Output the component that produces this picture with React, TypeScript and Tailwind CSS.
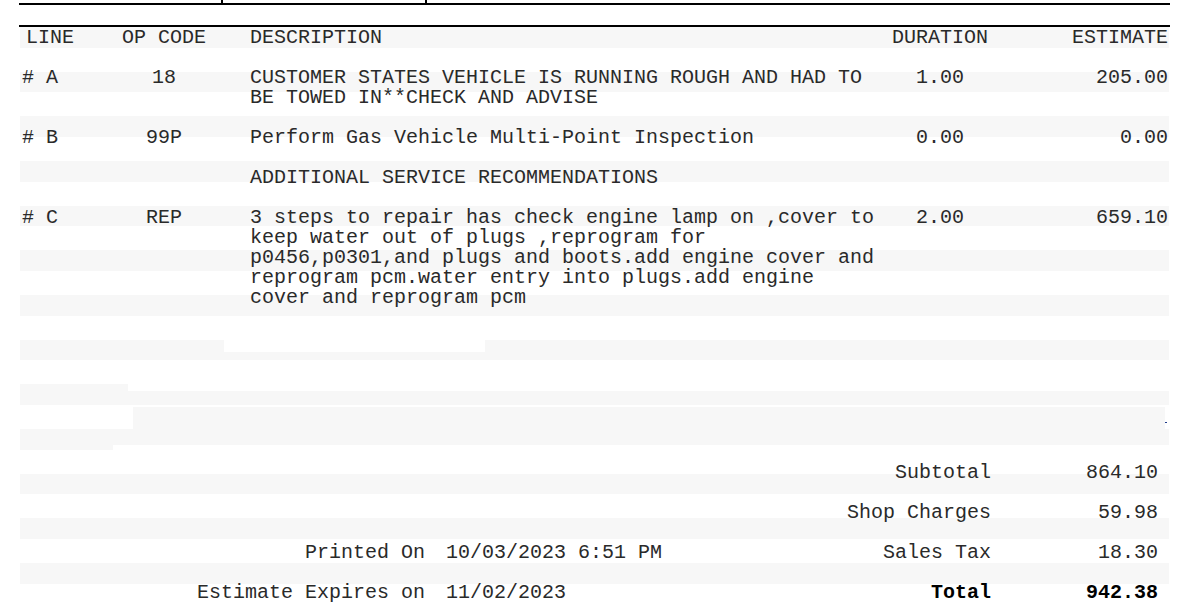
import React from 'react';

interface LineItem {
  line: string;
  op: string;
  desc: string;
  dur: string;
  est: string;
}

const items: LineItem[] = [
  {
    line: '# A',
    op: '18',
    desc: 'CUSTOMER STATES VEHICLE IS RUNNING ROUGH AND HAD TO BE TOWED IN**CHECK AND ADVISE',
    dur: '1.00',
    est: '205.00',
  },
  { line: '# B', op: '99P', desc: 'Perform Gas Vehicle Multi-Point Inspection', dur: '0.00', est: '0.00' },
  { line: '', op: '', desc: 'ADDITIONAL SERVICE RECOMMENDATIONS', dur: '', est: '' },
  {
    line: '# C',
    op: 'REP',
    desc: '3 steps to repair has check engine lamp on ,cover to keep water out of plugs ,reprogram for p0456,p0301,and plugs and boots.add engine cover and reprogram pcm.water entry into plugs.add engine cover and reprogram pcm',
    dur: '2.00',
    est: '659.10',
  },
];

const totals = [
  { left: '', date: '', label: 'Subtotal', value: '864.10', bold: false },
  { left: '', date: '', label: 'Shop Charges', value: '59.98', bold: false },
  { left: 'Printed On', date: '10/03/2023 6:51 PM', label: 'Sales Tax', value: '18.30', bold: false },
  { left: 'Estimate Expires on', date: '11/02/2023', label: 'Total', value: '942.38', bold: true },
];

const ItemRow: React.FC<{ item: LineItem }> = ({ item }) => (
  <div className="flex mt-5">
    <div className="w-[84px] pl-[2px] whitespace-pre">{item.line}</div>
    <div className="w-[120px] text-center">{item.op}</div>
    <div className="w-[656px] pl-[26px]">{item.desc}</div>
    <div className="w-[120px] text-center">{item.dur}</div>
    <div className="flex-1 text-right pr-[1px]">{item.est}</div>
  </div>
);

const App: React.FC = () => {
  return (
    <div className="min-h-[612px] bg-white text-[#2a2a2a] font-['Liberation_Mono','Courier_New',monospace] text-[20px] leading-[20px]">
      <div className="ml-[19px] w-[1151px]">
        {/* bottom edge of the table above */}
        <div className="flex h-[3px]">
          <div className="w-[202px]" />
          <div className="w-[2px] bg-black" />
          <div className="w-[202px]" />
          <div className="w-[2px] bg-black" />
        </div>
        <div className="h-[2px] bg-black" />
        <div className="h-5" />
        <div className="h-[2px] bg-black" />

        <div className="mx-px bg-[image:repeating-linear-gradient(to_bottom,#f7f7f7_0px,#f7f7f7_20.5px,#ffffff_20.5px,#ffffff_44.667px)]">
          {/* header */}
          <div className="flex h-[21px] pt-px">
            <div className="w-[84px] pl-[6px]">LINE</div>
            <div className="w-[120px] text-center">OP CODE</div>
            <div className="w-[656px] pl-[26px]">DESCRIPTION</div>
            <div className="w-[120px] text-center">DURATION</div>
            <div className="flex-1 text-right pr-[1px]">ESTIMATE</div>
          </div>

          {items.map((item, i) => (
            <ItemRow key={i} item={item} />
          ))}

          <div className="h-[155px] flex flex-col">
            <div className="flex mt-[31px] h-[13px]">
              <div className="w-[204px]" />
              <div className="w-[261px] bg-white" />
            </div>
            <div className="flex mt-[32px] h-[7px]">
              <div className="w-[108px]" />
              <div className="flex-1 bg-white" />
            </div>
            <div className="flex mt-[16px] h-[22px]">
              <div className="w-[113px]" />
              <div className="w-[1032px] bg-[#f7f7f7]" />
              <div className="w-[2px] h-px mt-[15px] bg-[#1e3a8a]" />
            </div>
            <div className="flex mt-[16px] h-[5px]">
              <div className="w-[93px]" />
              <div className="flex-1 bg-white" />
            </div>
          </div>

          {/* totals */}
          <div className="flex flex-col gap-5">
            {totals.map((t, i) => (
              <div key={i} className="flex h-5">
                <div className="w-[405px] text-right whitespace-pre">{t.left}</div>
                <div className="w-[300px] ml-[21px] whitespace-pre">{t.date}</div>
                <div className={`flex-1 text-right ${t.bold ? 'font-bold text-black' : ''}`}>{t.label}</div>
                <div className={`w-[167px] text-right ${t.bold ? 'font-bold text-black' : ''}`}>{t.value}</div>
                <div className="w-[11px]" />
              </div>
            ))}
          </div>
        </div>
      </div>
    </div>
  );
};

export default App;
